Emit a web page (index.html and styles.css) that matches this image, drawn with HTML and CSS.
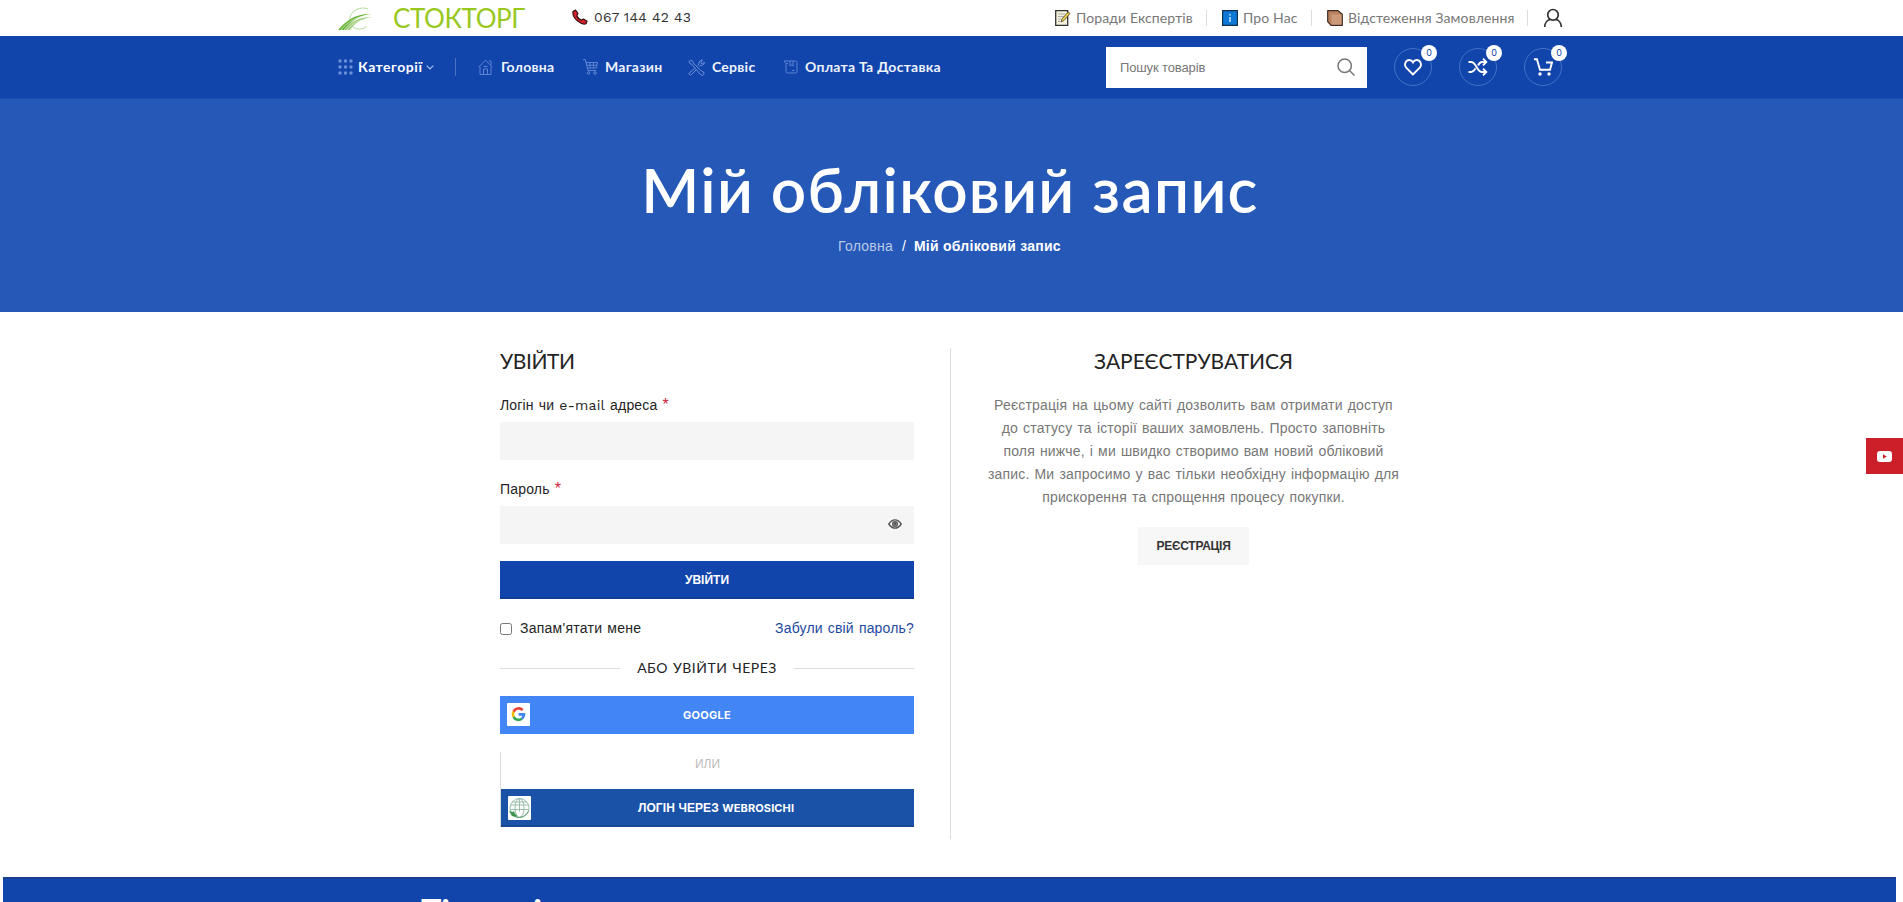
FILE: index.html
```html
<!DOCTYPE html>
<html lang="uk">
<head>
<meta charset="utf-8">
<title>Мій обліковий запис</title>
<link rel="stylesheet" href="styles.css">
</head>
<body>
<header>
  <div class="topbar">
    <a class="logo">
      <svg class="logo-mark" width="38" height="26" viewBox="0 0 38 26" fill="none">
        <path d="M31 3C24 0 15 4 13 11s3 12 9 12c4 0 6-1 8-3" stroke="#b5dc9c"/>
        <path d="M1 24C9 14 20 7 35 8 22 9 14 15 7 24z" fill="#6fb83f"/>
        <path d="M7 24C14 15 22 11 35 11c-11 2-17 6-22 13z" fill="#a3cf7c"/>
        <path d="M4 24C12 14 22 10 34 9M10 24c5-7 12-10 20-11" stroke="#fff" stroke-width=".5"/>
      </svg>
      <span class="logo-text">СТОКТОРГ</span>
    </a>
    <a class="phone">
      <svg width="16" height="16" viewBox="0 0 16 16"><path d="M1 2.500 3.500 1 6 4.500 4.800 6.500C5.500 8.500 7.500 10.500 9.500 11L11.500 10 15 12.300 14 14.700C9.500 16.500 0 9.500 1 2.500z" fill="#d8212b" stroke="#31100f" stroke-width="1.200" stroke-linejoin="round"/></svg>
      <span>067 144 42 43</span>
    </a>
    <nav class="toplinks">
      <a class="tl"><svg width="16" height="16" viewBox="0 0 16 16"><path d="M.7.7h12v14.600h-12z" fill="#f4f1dc" stroke="#333" stroke-width="1.300"/><path d="M3 4h7M3 6.500h6M3 9h3M3 11.500h2" stroke="#aaa"/><path d="m6 12 1-3 6-7 2 1.500-6 7z" fill="#f1cf4b" stroke="#4a4433" stroke-width=".8"/></svg><span class="t1">Поради Експертів</span></a>
      <a class="tl"><svg width="16" height="16" viewBox="0 0 16 16"><path d="M.6.600h14.800v14.800H.6z" fill="#0d78d6" stroke="#12314d" stroke-width="1.200"/><path d="M8 4v1.500M8 7v5" stroke="#dff1ff" stroke-width="1.300"/></svg><span class="t2">Про Нас</span></a>
      <a class="tl"><svg width="16" height="16" viewBox="0 0 16 16"><path d="M.7.700H11l4.300 3.500v11.100H4L.7 11.500z" fill="#bd835f" stroke="#3b2b24" stroke-width="1.200" stroke-linejoin="round"/><path d="M4.500 4.500h10v10h-10z" fill="#cb9a7a"/></svg><span class="t3">Відстеження Замовлення</span></a>
      <a class="user"><svg width="20" height="20" viewBox="0 0 20 20" fill="none" stroke="#333" stroke-width="1.700"><circle cx="10" cy="6.800" r="5.300"/><path d="M1.700 19c0-4.500 3-7 5.500-7.600M18.300 19c0-4.500-3-7-5.500-7.600"/></svg></a>
    </nav>
  </div>
  <div class="mainbar"><div class="mainbar-in">
    <nav class="menu">
      <a class="cats"><svg width="15" height="16" viewBox="0 0 15 16" fill="#6d92dc"><g id="r"><circle cx="2" cy="2" r="1.700"/><circle cx="7.500" cy="2" r="1.700"/><circle cx="13" cy="2" r="1.700"/></g><use href="#r" y="6"/><use href="#r" y="12"/></svg><span>Категорії</span><svg class="chev" width="8" height="5" viewBox="0 0 8 5" fill="none" stroke="#a9c1f0" stroke-width="1.200"><path d="m.7.700 3.300 3.300L7.300.700"/></svg></a>
      <a class="mi i1"><svg width="15" height="16" viewBox="0 0 15 16" fill="none" stroke="#5f84d3"><path d="M.7 8 7.500 1.200 14.300 8M2 7.500v8h11v-8M11 2h2v4M5.500 15.500V10h4v5.500M5.500 7.500h4"/></svg><span>Головна</span></a>
      <a class="mi i2"><svg width="15" height="16" viewBox="0 0 15 16" fill="none" stroke="#5f84d3"><path d="M0 .7h2.300L5 11.500h8M3 3.500h11.500l-1.300 5.500H4.500M4 6.200h10M7 3.500v5.500M10.500 3.500v5.500"/><circle cx="5.500" cy="14" r="1.300"/><circle cx="12" cy="14" r="1.300"/></svg><span>Магазин</span></a>
      <a class="mi i3"><svg width="17" height="17" viewBox="0 0 17 17" fill="none" stroke="#6f91d8"><path d="m1 2.500 1.500-1.500L5 2.500v1.300l8.500 8.400 2.500 1.300v1.700L14.500 16.500l-2.300-1.300L3.500 5H2.300zM9.500 6.500 11 5c-.5-2 1-4 3.500-4l-1.700 2 .5 1.300 1.500.3L16.300 3c.3 2.500-2 4-4 3.300l-1.500 1.500M6.500 9.500 1.200 14c-.6 1.500.8 2.500 2 1.800L8 11"/></svg><span>Сервіс</span></a>
      <a class="mi i4"><svg width="15" height="14" viewBox="0 0 15 14" fill="none" stroke="#5f84d3"><path d="M3 3.500v8q0 1.500 1.500 1.500h8q1.500 0 1.500-1.500v-9Q14 1 12.500 1H1l2 2.500h2M7 1v5l1.500-1L10 6V1M9 10.500h2.500"/></svg><span>Оплата Та Доставка</span></a>
    </nav>
    <div class="search"><span>Пошук товарів</span><svg width="18" height="18" viewBox="0 0 18 18" fill="none" stroke="#777" stroke-width="1.500"><circle cx="7.700" cy="7.700" r="6.700"/><path d="m12.500 12.500 5 5"/></svg></div>
    <div class="tools">
      <a class="tool"><svg width="18" height="17" viewBox="0 0 18 17" fill="none" stroke="#fff" stroke-width="1.900"><path d="M9 15.500 2.200 8.600C-.5 5.500 2 1 5.300 1 7.200 1 8.300 2 9 3.300 9.700 2 10.800 1 12.700 1 16 1 18.500 5.500 15.800 8.600z"/></svg><b>0</b></a>
      <a class="tool"><svg width="20" height="18" viewBox="0 0 20 18" fill="none" stroke="#fff" stroke-width="1.900"><path d="M.5 4h2.700C8 4 9 14 14 14h4M.5 14h2.700c2 0 3.300-1.800 4.300-3.600M10 7.500C11 5.500 12 4 14 4h4M15 .7 18.300 4 15 7.300M15 10.700l3.300 3.300-3.300 3.300"/></svg><b>0</b></a>
      <a class="tool"><svg width="19" height="18" viewBox="0 0 19 18" fill="none" stroke="#fff" stroke-width="1.900"><path d="M0 1.300h2.900L6 11.700h10L18 4.500h-6"/><circle cx="6" cy="16" r="1.700" fill="#fff" stroke="none"/><circle cx="15" cy="16" r="1.700" fill="#fff" stroke="none"/></svg><b>0</b></a>
    </div>
  </div></div>
</header>
<section class="hero">
  <h1>Мій обліковий запис</h1>
  <p class="crumbs"><a>Головна</a><i>/</i><strong>Мій обліковий запис</strong></p>
</section>
<main>
  <section class="login">
    <h2>УВІЙТИ</h2>
    <label class="lab">Логін чи <span class="latin">e-mail</span> адреса <em>*</em></label>
    <div class="field"></div>
    <label class="lab">Пароль <em>*</em></label>
    <div class="field"><svg width="14" height="10" viewBox="0 0 14 10" fill="none" stroke="#555" stroke-width="1.400"><path d="M.8 5Q3.500.9 7 .9T13.200 5Q10.500 9.100 7 9.100T.8 5z"/><circle cx="7" cy="5" r="2.300"/><circle cx="7" cy="5" r=".7"/></svg></div>
    <button class="btn submit">УВІЙТИ</button>
    <div class="remember"><label><input type="checkbox"><span>Запам'ятати мене</span></label><a>Забули свій пароль?</a></div>
    <div class="or"><span>АБО УВІЙТИ ЧЕРЕЗ</span></div>
    <a class="btn google"><svg class="tile" width="23" height="23" viewBox="0 0 23 23"><rect width="23" height="23" rx="1" fill="#fff"/><g fill="none" stroke-width="2.700"><path d="M15.700 7.200A5.500 5.500 0 0 0 6.600 8.700" stroke="#ea4335"/><path d="M6.600 8.700a5.500 5.500 0 0 0 0 5.200" stroke="#fbbc05"/><path d="M6.600 13.900a5.500 5.500 0 0 0 8.300 1.800" stroke="#34a853"/><path d="M14.900 15.700q2-1.700 2-4.300h-5.400" stroke="#4285f4"/></g></svg><span>GOOGLE</span></a>
    <div class="alt">
      <p>ИЛИ</p>
      <a class="btn rosichi"><svg class="tile" width="23" height="24" viewBox="0 0 23 24"><rect width="23" height="24" rx="1" fill="#fff"/><g fill="none" stroke="#8fb8a0" stroke-width=".9"><circle cx="11.500" cy="12" r="9.500"/><ellipse cx="11.500" cy="12" rx="4.500" ry="9.500"/><path d="M11.500 2.500v13M2.500 9h18M2 13.500h19M4 6h15"/><path d="M6 20c5 3 12 1 14.500-5" stroke="#4a9c66"/></g><path d="m1 15 4 1 1-1 1 3 2 1-1 2-4-1z" fill="#3e9450"/></svg><span>ЛОГІН ЧЕРЕЗ <small>WEBROSICHI</small></span></a>
    </div>
  </section>
  <section class="register">
    <h2>ЗАРЕЄСТРУВАТИСЯ</h2>
    <p>Реєстрація на цьому сайті дозволить вам отримати доступ<br>до статусу та історії ваших замовлень. Просто заповніть<br>поля нижче, і ми швидко створимо вам новий обліковий<br>запис. Ми запросимо у вас тільки необхідну інформацію для<br>прискорення та спрощення процесу покупки.</p>
    <a class="reg-btn">РЕЄСТРАЦІЯ</a>
  </section>
</main>
<footer><strong>Тільки і</strong></footer>
<a class="youtube"><svg width="15" height="11" viewBox="0 0 15 11"><rect width="15" height="11" rx="3" fill="#fff"/><path d="m6 3.200 3.800 2.300L6 7.800z" fill="#cb1f2a"/></svg></a>
</body>
</html>
```
FILE: styles.css
```css
* { box-sizing: border-box; }
html, body { height: 100%; }
body { margin: 0; overflow: hidden; background: #fff; color: #242424; font: 14px/23px "Liberation Sans", Arial, sans-serif; }
svg { flex: none; display: block; }
a, span { white-space: nowrap; }
h1, h2, p { margin: 0; font-weight: normal; }

.topbar { display: flex; align-items: center; height: 36px; width: 1227px; margin-left: 337px; }
.logo { display: flex; align-items: center; width: 235px; }
.logo-mark { margin-top: 1px; }
.logo-text { margin-left: 18px; color: #98c81e; font: 26px/36px Lato, sans-serif; letter-spacing: -.4px; }
.phone { display: flex; align-items: center; gap: 6px; height: 34px; margin-bottom: 2px; font: 14px/34px "Work Sans", Inter, sans-serif; letter-spacing: .2px; color: #333; }
.toplinks { display: flex; align-items: center; margin-left: auto; font: 14px/20px Lato, sans-serif; letter-spacing: .12px; color: #777; }
.tl { display: flex; align-items: center; gap: 5px; height: 16px; margin-right: 15px; padding-right: 13px; border-right: 1px solid #ddd; }
.t1 { width: 117px; }
.t2 { width: 55px; }
.t3 { width: 166px; }
.user { width: 21px; }

.mainbar { background: #1145ab; height: 63px; border-bottom: 1px solid #1b4eb1; }
.mainbar-in { display: flex; align-items: center; height: 62px; width: 1226px; margin-left: 338px; color: #fff; }
.menu { display: flex; align-items: center; width: 768px; font: 700 14px/20px Lato, sans-serif; letter-spacing: .26px; }
.cats { display: flex; align-items: center; width: 118px; height: 18px; border-right: 1px solid #4a73c4; margin-right: 22px; }
.cats span { margin-left: 5px; width: 65px; letter-spacing: .5px; }
.chev { margin-left: 3px; }
.mi { display: flex; align-items: center; gap: 7px; color: #eef3fd; }
.i1 { width: 105px; gap: 8px; }
.i2 { width: 105px; }
.i3 { width: 95px; }
.search { display: flex; align-items: center; justify-content: space-between; width: 261px; height: 41px; background: #fff; color: #777; padding: 0 12px 0 14px; font-size: 13px; letter-spacing: -.13px; }
.tools { display: flex; gap: 27px; margin-left: 27px; }
.tool { position: relative; display: flex; align-items: center; justify-content: center; width: 38px; height: 38px; border: 1px solid #4470c6; border-radius: 50%; }
.tool b { position: absolute; left: 26px; top: -4px; width: 16px; height: 16px; border-radius: 50%; background: #fff; color: #1145ab; font: 9px/16px Inter, sans-serif; text-align: center; }

.hero { height: 213px; background: #2659b7; color: #fff; text-align: center; padding-top: 50px; }
.hero h1 { font: 600 62px/80px Lato, sans-serif; letter-spacing: 1.3px; padding-right: 3px; }
.crumbs { display: flex; justify-content: center; padding: 6px 4px 0 0; }
.crumbs a { color: #b9c9ea; letter-spacing: .25px; }
.crumbs i { font-style: normal; margin: 0 8px 0 9px; }
.crumbs strong { letter-spacing: .25px; }

main { display: flex; width: 900px; margin: 36px 0 0 500px; height: 491px; word-spacing: 1px; letter-spacing: .17px; }
h2 { font: 400 21px/26px Lato, sans-serif; }
.login { flex: none; width: 451px; padding-right: 36px; border-right: 1px solid #ddd; }
.login h2 { letter-spacing: -.4px; }
.lab { display: block; margin: 18px 0 5px; }
h2 + .lab { margin-top: 20px; }
.lab em { color: #d0213c; font-style: normal; font-size: 16px; line-height: 20px; }
.latin { font-family: "Work Sans", Inter, sans-serif; letter-spacing: .2px; }
.field { height: 38px; background: #f5f5f5; display: flex; align-items: center; justify-content: flex-end; padding: 0 12px 2px 0; }
.btn { position: relative; display: flex; align-items: center; justify-content: center; width: 100%; height: 38px; border: 0; color: #fff; font: 700 12px/18px "Liberation Sans", Arial, sans-serif; word-spacing: 0; }
.submit { margin-top: 17px; padding-top: 3px; background: #1145ab; border-bottom: 2px solid #103e98; }
.remember { display: flex; justify-content: space-between; margin-top: 18px; }
.remember label { display: flex; align-items: center; }
.remember label span { letter-spacing: .25px; }
.remember input { margin: 0 8px 0 0; width: 12px; height: 12px; }
.remember a { color: #1d4a9f; }
.or { display: flex; align-items: center; gap: 17px; margin-top: 16px; font: 400 14px/24px Lato, sans-serif; letter-spacing: .5px; }
.or::before, .or::after { content: ""; flex: 1; height: 1px; background: #ddd; }
.google { background: #4285f4; margin-top: 16px; font-family: Inter, sans-serif; font-size: 11px; letter-spacing: .25px; }
.tile { position: absolute; left: 7px; top: 7px; }
.alt { margin-top: 18px; border-left: 1px solid #ddd; }
.alt p { height: 37px; color: #bbb; font-size: 12px; line-height: 24px; text-align: center; letter-spacing: 0; }
.rosichi { padding: 2px 0 0 17px; background: #1a52a8; border-bottom: 2px solid #174890; letter-spacing: .1px; }
.rosichi small { font: 700 11px/18px Inter, sans-serif; }
.register { flex: none; width: 485px; text-align: center; }
.register h2 { letter-spacing: 0; }
.register p { margin-top: 20px; color: #777; white-space: nowrap; }
.reg-btn { display: inline-block; margin-top: 18px; padding: 0 18px; height: 38px; background: #f7f7f7; color: #333; font: 700 12px/38px "Liberation Sans", Arial, sans-serif; letter-spacing: -.25px; }
footer { margin: 38px 7px 0 3px; height: 25px; overflow: hidden; background: #1145ab; border-top: 2px solid #1a3e92; color: #fff; }
footer strong { display: block; padding: 10px 0 0 418px; font: 700 34px/44px Lato, sans-serif; }
.youtube { position: absolute; right: 0; top: 438px; display: flex; align-items: center; justify-content: center; width: 37px; height: 36px; background: #cb1f2a; }
```
